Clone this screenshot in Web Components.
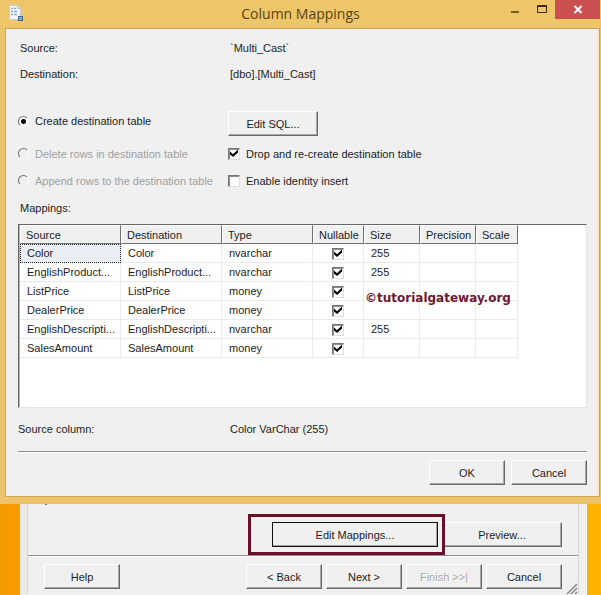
<!DOCTYPE html>
<html lang="en">
<head>
<meta charset="utf-8">
<title>Column Mappings</title>
<style>
  html, body { margin: 0; min-height: 100vh; }
  body {
    font: 11px/14px "Liberation Sans", Arial, sans-serif;
    color: #1c1c1c;
    background: linear-gradient(90deg, #f39a00, #fb9c00 20px, #ffb400 calc(100% - 14px), #ffb200);
    overflow: hidden;
    display: flex;
    flex-direction: column;
  }
</style>
</head>
<body>
<mapping-dialog>
  <title-bar slot="title">Column Mappings</title-bar>
  <options-form></options-form>
  <mapping-grid></mapping-grid>
  <column-summary></column-summary>
  <win-button slot="actions">OK</win-button>
  <win-button slot="actions">Cancel</win-button>
</mapping-dialog>
<wizard-window>
  <win-button slot="tools" class="focus">Edit Mappings...</win-button>
  <win-button slot="tools" class="preview">Preview...</win-button>
  <win-button slot="help">Help</win-button>
  <win-button slot="nav">&lt; Back</win-button>
  <win-button slot="nav">Next &gt;</win-button>
  <win-button slot="nav" disabled>Finish &gt;&gt;|</win-button>
  <win-button slot="nav">Cancel</win-button>
</wizard-window>

<script>
const CHECK = `
  input[type=checkbox] {
    appearance: none; box-sizing: border-box; flex: none;
    width: 12px; height: 12px; margin: 0; background: #fff;
    border: 1px solid; border-color: #777 #ddd #ddd #777;
    box-shadow: inset 1px 1px #8c8c8c; vertical-align: middle;
  }
  input[type=checkbox]:checked::before {
    content: ""; display: block; width: 8px; height: 8px; margin: 1px; background: #000;
    clip-path: polygon(0 25%, 38% 58%, 100% 0, 100% 36%, 38% 94%, 0 61%);
  }`;

function define(name, css, html, setup) {
  const template = document.createElement('template');
  template.innerHTML = `<style>${css}</style>${html}`;
  customElements.define(name, class extends HTMLElement {
    constructor() {
      super();
      this.attachShadow({ mode: 'open' }).append(template.content.cloneNode(true));
    }
    connectedCallback() { if (setup) setup(this, this.shadowRoot); }
  });
}

define('win-button', `
  :host { display: block; width: 76px; }
  button {
    display: block; box-sizing: border-box; width: 100%; height: 25px; padding: 0;
    font: inherit; color: #1c1c1c; background: #f0f0f0;
    border: 1px solid; border-color: #fff #686868 #686868 #fff;
    box-shadow: inset -1px -1px #a8a8a8;
  }
  button:disabled { color: #a6a6a6; text-shadow: 1px 1px #fff; }
`, `<button type="button"><slot></slot></button>`, (host, root) => {
  root.querySelector('button').disabled = host.hasAttribute('disabled');
});

define('title-bar', `
  :host {
    display: grid; grid-template-columns: 1fr auto 1fr; height: 28px;
    background: #eec568; color: #584312;
  }
  .icon { margin: 5px 0 0 8px; }
  h1 { margin: 0; font: 14px/28px "Open Sans", sans-serif; }
  .controls { display: flex; justify-content: flex-end; padding-right: 1px; }
  button { width: 27px; height: 19px; padding: 0; border: 0; background: none; display: block; }
  button.close { width: 45px; background: #c9504f; }
  svg { display: block; }
  button svg { margin: 0 auto; }
`, `
  <svg class="icon" width="16" height="17" viewBox="0 0 16 17">
    <path d="M1.5.5h8l3 3v11h-11z" fill="#f4f8fd" stroke="#c2cddb"/>
    <path d="M9.500 .5v3h3" fill="#d8e3ef" stroke="#aebfd0"/>
    <path d="M3 3.500h2m1 0h2M3 6.500h2m1 0h3M3 9.500h2m1 0h3" stroke="#8fa9c8" stroke-width="1.500"/>
    <rect x="10.500" y="11.500" width="4" height="4" fill="#79acd2" stroke="#3e658a"/>
  </svg>
  <h1><slot></slot></h1>
  <div class="controls">
    <button type="button" aria-label="Minimize"><svg width="27" height="19"><path d="M10 12h8" stroke="#7d5b1c" stroke-width="2"/></svg></button>
    <button type="button" aria-label="Maximize"><svg width="27" height="19"><path d="M9.500 5.500h9v7h-9zM9 6.500h10" fill="none" stroke="#3b2908"/></svg></button>
    <button type="button" class="close" aria-label="Close"><svg width="45" height="19"><path d="M19.500 6l7 7m0-7l-7 7" stroke="#fff" stroke-width="2"/></svg></button>
  </div>
`);

define('mapping-dialog', `
  :host {
    display: block; background: #ecc46a; padding: 0 1px 7px 5px;
  }
  header { margin: 0 -1px 0 -5px; }
  main {
    background: #f0f0f0; border: 1px solid #d0a456; border-right-color: #c99d52;
    padding: 6px 7px 11px 12px; box-shadow: inset -3px 0 #f8e9d3;
  }
  footer {
    display: flex; justify-content: flex-end; gap: 6px; padding-top: 8px; margin-right: 5px;
    border-top: 1px solid #8e8e8e; box-shadow: inset 0 1px #fff;
  }
`, `
  <header><slot name="title"></slot></header>
  <main><slot></slot><footer><slot name="actions"></slot></footer></main>
`);

define('options-form', `
  :host { display: block; }
  .grid { display: grid; grid-template-columns: 210px 1fr; align-items: center; }
  .info { grid-auto-rows: 26px; }
  .info > *, .caption { padding-left: 2px; }
  .choices { grid-template-rows: 29px; grid-auto-rows: 27px; margin-top: 24px; padding-bottom: 4px; }
  .choices win-button { width: 90px; align-self: start; }
  .choices label { display: flex; align-items: center; gap: 6px; white-space: nowrap; }
  .choices .top { align-self: start; line-height: 20px; }
  .caption { line-height: 20px; padding-bottom: 6px; }
  .off { color: #a0a0a0; }
  input[type=radio] {
    appearance: none; box-sizing: border-box; flex: none; width: 11px; height: 11px; margin: 0;
    border-radius: 50%; border: 1px solid; border-color: #707070 #fafafa #fafafa #707070;
    background: #fff;
  }
  input[type=radio]:disabled { background: #f0f0f0; }
  input[type=radio]:checked { background: radial-gradient(circle, #000 2px, #fff 3px); }
  ${CHECK}
`, `
  <div class="grid info">
    <span>Source:</span><span>\`Multi_Cast\`</span>
    <span>Destination:</span><span>[dbo].[Multi_Cast]</span>
  </div>
  <div class="grid choices">
    <label class="top"><input type="radio" name="mode" checked>Create destination table</label>
    <win-button>Edit SQL...</win-button>
    <label class="off"><input type="radio" name="mode" disabled>Delete rows in destination table</label>
    <label><input type="checkbox" checked>Drop and re-create destination table</label>
    <label class="off"><input type="radio" name="mode" disabled>Append rows to the destination table</label>
    <label><input type="checkbox">Enable identity insert</label>
  </div>
  <div class="caption">Mappings:</div>
`);

define('mapping-grid', `
  :host {
    display: block; position: relative; min-height: 182px; margin-right: 5px; background: #fff;
    border: 1px solid; border-color: #686868 #e0e6e6 #e0e6e6 #686868;
    padding-left: 1px; box-shadow: inset 1px 0 #b0b0b0;
  }
  table { table-layout: fixed; width: 498px; border-collapse: separate; border-spacing: 0; }
  th, td { box-sizing: border-box; height: 19px; padding: 0 0 0 6px; text-align: left; white-space: nowrap; overflow: hidden; }
  th {
    font-weight: normal; background: #f0f0f0;
    border: 1px solid; border-color: #fff #707070 #707070 #fff;
    padding-left: 5px;
  }
  td { border: solid #e6ebeb; border-width: 0 1px 1px 0; padding-left: 7px; }
  td.check { text-align: center; padding: 0; line-height: 12px; }
  tbody tr:first-child td:first-child { background: #e9eef5; outline: 1px dotted #222; outline-offset: -1px; }
  .mark {
    position: absolute; left: 346px; top: 66px;
    font: bold 12px/14px "DejaVu Sans", Verdana, sans-serif; color: #6e1731;
  }
  ${CHECK}
`, `
  <table>
    <colgroup><col style="width:101px"><col style="width:101px"><col style="width:91px"><col style="width:51px"><col style="width:56px"><col style="width:56px"><col style="width:42px"></colgroup>
    <thead><tr><th>Source</th><th>Destination</th><th>Type</th><th>Nullable</th><th>Size</th><th>Precision</th><th>Scale</th></tr></thead>
    <tbody></tbody>
  </table>
  <span class="mark">©tutorialgateway.org</span>
`, (host, root) => {
  const rows = [
    ['Color', 'nvarchar', '255'],
    ['EnglishProduct...', 'nvarchar', '255'],
    ['ListPrice', 'money', ''],
    ['DealerPrice', 'money', ''],
    ['EnglishDescripti...', 'nvarchar', '255'],
    ['SalesAmount', 'money', '']
  ];
  root.querySelector('tbody').innerHTML = rows.map(([name, type, size]) =>
    `<tr><td>${name}</td><td>${name}</td><td>${type}</td><td class="check"><input type="checkbox" checked aria-label="${name} nullable"></td><td>${size}</td><td></td><td></td></tr>`
  ).join('');
});

define('column-summary', `
  :host { display: grid; grid-template-columns: 212px 1fr; padding: 14px 0 15px; }
`, `<span>Source column:</span><span>Color VarChar (255)</span>`);

define('wizard-window', `
  :host {
    display: block; flex: 1; margin: 0 14px 0 20px; padding: 0 8px 0 7px;
    background: linear-gradient(90deg, #ecebe6 7px, #f0f0f0 7px);
  }
  .inner { position: relative; border: solid #d3d8cc; border-width: 0 1px; min-height: 90px; }
  .inner::before { content: ""; position: absolute; left: 17px; top: 0; width: 2px; height: 1px; background: #666; }
  .row { display: flex; justify-content: flex-end; gap: 4px; padding: 0 16px; }
  .tools { padding-top: 18px; padding-bottom: 8px; border-bottom: 1px solid #8e8e8e; box-shadow: 0 1px #fff; }
  .nav { padding-top: 8px; padding-bottom: 5px; }
  .help { margin-right: auto; }
  ::slotted(.focus) { position: relative; z-index: 1; width: 166px; outline: 1px solid #111; outline-offset: -1px; }
  ::slotted(.focus)::after {
    content: ""; position: absolute; inset: -8px -7px -8px -24px; border: 3px solid #6b1029; pointer-events: none;
  }
  ::slotted(.preview) { width: 120px; }
  .grip { position: absolute; right: 0; bottom: 0; }
`, `
  <div class="inner">
    <div class="row tools"><slot name="tools"></slot></div>
    <div class="row nav"><div class="help"><slot name="help"></slot></div><slot name="nav"></slot></div>
    <svg class="grip" width="12" height="11"><path d="M1 11L11 1M5 11l6-6M9 11l2-2" stroke="#888" stroke-width="1.500"/></svg>
  </div>
`);
</script>
</body>
</html>
